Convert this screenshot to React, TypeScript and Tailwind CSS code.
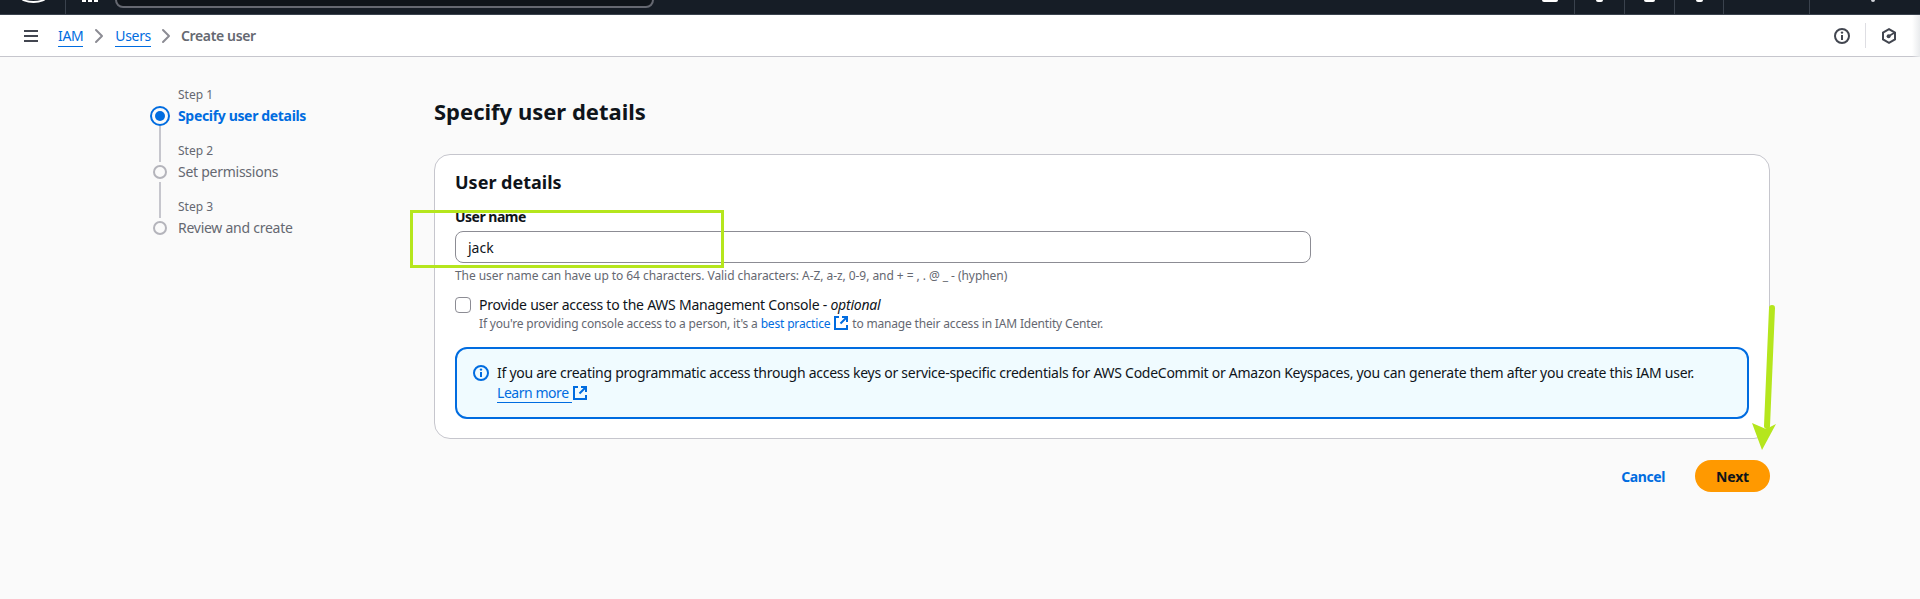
import React from "react";
import { ChevronRight } from "lucide-react";

const font = "[font-family:'Noto_Sans',sans-serif]";

function ExtIcon({ size = 16 }: { size?: number }) {
  return (
    <svg width={size} height={size} viewBox="0 0 16 16" fill="none" stroke="#006ce0" strokeWidth="2" className="inline-block align-[-3px]">
      <path d="M6 2H2v12h12v-4" />
      <path d="M9 2h5v5" />
      <path d="M14 2 7.5 8.5" />
    </svg>
  );
}

function InfoIcon({ color, size = 16 }: { color: string; size?: number }) {
  return (
    <svg width={size} height={size} viewBox="0 0 16 16" fill="none" stroke={color} strokeWidth="2" className="shrink-0">
      <circle cx="8" cy="8" r="7" />
      <path d="M8 7v5" />
      <circle cx="8" cy="4.6" r="1.2" fill={color} stroke="none" />
    </svg>
  );
}

function HexIcon() {
  return (
    <svg width="16" height="16" viewBox="0 0 16 16" fill="none" stroke="#424650" strokeWidth="2">
      <path d="M8 1.2 14 4.6v6.8L8 14.8 2 11.4V4.6Z" />
      <circle cx="7.6" cy="8.2" r="2" fill="#424650" stroke="none" />
      <path d="M8 8l5-3" strokeWidth="1.6" />
    </svg>
  );
}

function MenuIcon() {
  return (
    <svg width="16" height="14" viewBox="0 0 16 14" fill="#424650">
      <rect x="1" y="1" width="14" height="2" />
      <rect x="1" y="6" width="14" height="2" />
      <rect x="1" y="11" width="14" height="2" />
    </svg>
  );
}

function Step({ n, title, active, first, last }: { n: number; title: string; active?: boolean; first?: boolean; last?: boolean }) {
  return (
    <li className="flex h-[56px] gap-2">
      <div className="flex w-5 flex-col items-center">
        {first ? <div className="h-[19px]" /> : <div className="h-[19px] w-[2px] bg-[#c6c6cd]" />}
        {active ? (
          <div className="flex size-5 shrink-0 items-center justify-center rounded-full border-2 border-[#006ce0]">
            <div className="size-[10px] rounded-full bg-[#006ce0]" />
          </div>
        ) : (
          <div className="flex size-5 shrink-0 items-center justify-center">
            <div className="size-[14px] rounded-full border-2 border-[#b4b4bb]" />
          </div>
        )}
        {!last && <div className="w-[2px] flex-1 bg-[#c6c6cd]" />}
      </div>
      <div>
        <div className="text-[12px] leading-[16px] text-[#656871]">Step {n}</div>
        <div className={active ? "mt-[3px] text-[14px] leading-[20px] font-bold tracking-[-0.34px] text-[#006ce0]" : "mt-[3px] text-[14px] leading-[20px] tracking-[-0.26px] text-[#656871]"}>{title}</div>
      </div>
    </li>
  );
}

export default function App() {
  return (
    <div className={`relative flex h-[599px] flex-col overflow-hidden bg-[#fafafa] ${font}`}>
      {/* Clipped global nav */}
      <header className="flex h-[15px] shrink-0 items-start overflow-hidden border-b border-[#3a424d] bg-[#161d26]">
        <div className="ml-[20px] mt-[-9px] h-[12px] w-[27px] rounded-[50%] border-2 border-white" />
        <div className="ml-[18px] h-[14px] w-px bg-[#3a424d]" />
        <div className="ml-[16px] flex gap-[2px]">
          <div className="h-[2px] w-[4px] bg-white" />
          <div className="h-[2px] w-[4px] bg-white" />
          <div className="h-[2px] w-[4px] bg-white" />
        </div>
        <div className="relative ml-[17px] mt-[-22px] h-[30px] w-[539px] rounded-[8px] border-2 border-[#656871] bg-[#0f141a]" />
        <div className="flex-1" />
        <div className="mt-[-1px] h-[3px] w-[16px] rounded-b-[2px] bg-white" />
        <div className="ml-[16px] h-[14px] w-px bg-[#3a424d]" />
        <div className="ml-[21px] h-[2px] w-[7px] rounded-b-full bg-white" />
        <div className="ml-[21px] h-[14px] w-px bg-[#3a424d]" />
        <div className="ml-[19px] h-[2px] w-[11px] rounded-b-full bg-white" />
        <div className="ml-[19px] h-[14px] w-px bg-[#3a424d]" />
        <div className="ml-[21px] h-[2px] w-[7px] rounded-b-full bg-white" />
        <div className="ml-[20px] h-[14px] w-px bg-[#3a424d]" />
        <div className="ml-[85px] h-[14px] w-px bg-[#3a424d]" />
        <div className="ml-[61px] mr-[45px] h-[2px] w-[4px] rounded-b-full bg-[#d1d5db]" />
      </header>

      {/* Breadcrumb bar */}
      <div className="flex h-[42px] shrink-0 items-center border-b border-[#c6c6cd] bg-white pl-[23px] pr-[23px]">
        <MenuIcon />
        <nav className="ml-[19px] flex items-center pt-[1px] text-[14px] leading-[20px] tracking-[-0.35px]">
          <a className="border-b border-[#006ce0] text-[#006ce0]">IAM</a>
          <ChevronRight size={24} color="#8c8c94" strokeWidth={2} className="mx-[4px]" />
          <a className="border-b border-[#006ce0] text-[#006ce0]">Users</a>
          <ChevronRight size={24} color="#8c8c94" strokeWidth={2} className="mx-[3px]" />
          <span className="font-semibold text-[#656871]">Create user</span>
        </nav>
        <div className="flex-1" />
        <InfoIcon color="#424650" />
        <div className="ml-[15px] h-[25px] w-px bg-[#dedee3]" />
        <div className="ml-[15px]"><HexIcon /></div>
      </div>

      {/* Content */}
      <div className="flex flex-1 pl-[150px]">
        <aside className="w-[284px] shrink-0 pt-[30px]">
          <ol>
            <Step n={1} title="Specify user details" active first />
            <Step n={2} title="Set permissions" />
            <Step n={3} title="Review and create" last />
          </ol>
        </aside>
        <main className="w-[1336px] pt-[39px]">
          <h1 className="text-[22px] leading-[30px] font-bold text-[#0f141a]">Specify user details</h1>
          <section className="mt-[28px] rounded-[16px] border border-[#c6c6cd] bg-white px-5 pb-[19px] pt-[15px]">
            <h2 className="text-[18px] leading-[24px] font-bold text-[#0f141a]">User details</h2>
            <label className="mt-[13px] block text-[14px] leading-[20px] font-bold tracking-[-0.5px] text-[#0f141a]">User name</label>
            <div className="mt-1 flex h-[32px] w-[856px] items-center rounded-[8px] border border-[#8c8c94] bg-white px-3 text-[14px] text-[#0f141a]">jack</div>
            <p className="mt-[5px] text-[12px] leading-[16px] tracking-[-0.06px] text-[#656871]">The user name can have up to 64 characters. Valid characters: A-Z, a-z, 0-9, and + = , . @ _ - (hyphen)</p>
            <div className="mt-[11px] flex gap-2">
              <div className="mt-[2px] size-4 shrink-0 rounded-[4px] border border-[#8c8c94] bg-white" />
              <div>
                <div className="text-[14px] leading-[20px] tracking-[-0.23px] text-[#0f141a]">Provide user access to the AWS Management Console - <em>optional</em></div>
                <div className="h-[16px] text-[12px] leading-[16px] tracking-[-0.17px] text-[#656871]">If you're providing console access to a person, it's a <span className="text-[#006ce0]">best practice</span> <ExtIcon size={16} /> to manage their access in IAM Identity Center.</div>
              </div>
            </div>
            <div className="mt-4 flex h-[72px] gap-2 rounded-[12px] border-2 border-[#006ce0] bg-[#f0fbff] px-4 py-[14px]">
              <div className="pt-[2px]"><InfoIcon color="#006ce0" /></div>
              <div className="text-[14px] leading-[20px] tracking-[-0.27px] text-[#0f141a]">
                <div>If you are creating programmatic access through access keys or service-specific credentials for AWS CodeCommit or Amazon Keyspaces, you can generate them after you create this IAM user.</div>
                <div><a className="border-b border-[#006ce0] tracking-[-0.45px] text-[#006ce0]">Learn more&nbsp;</a><ExtIcon size={16} /></div>
              </div>
            </div>
          </section>
          <div className="mt-[21px] flex items-center justify-end gap-[30px]">
            <button className="text-[14px] font-bold tracking-[-0.4px] text-[#006ce0]">Cancel</button>
            <button className="h-[32px] w-[75px] rounded-full bg-[#ff9900] text-[14px] font-bold tracking-[-0.2px] text-[#0f141a]">Next</button>
          </div>
        </main>
      </div>

      {/* Annotations */}
      <div className="absolute left-[410px] top-[210px] h-[58px] w-[314px] border-[3px] border-[#b5e61d]" />
      <svg className="absolute left-[1745px] top-[300px]" width="40" height="155" viewBox="1745 300 40 155" fill="none">
        <path d="M1772 308 L1767 426" stroke="#b5e61d" strokeWidth="6" strokeLinecap="round" />
        <path d="M1752 423 L1766 429 L1776 424 L1762 450 Z" fill="#b5e61d" />
      </svg>
      <div className="absolute right-0 top-[15px] h-[42px] w-[8px] bg-gradient-to-r from-transparent to-[#e9ebed]" />
    </div>
  );
}
